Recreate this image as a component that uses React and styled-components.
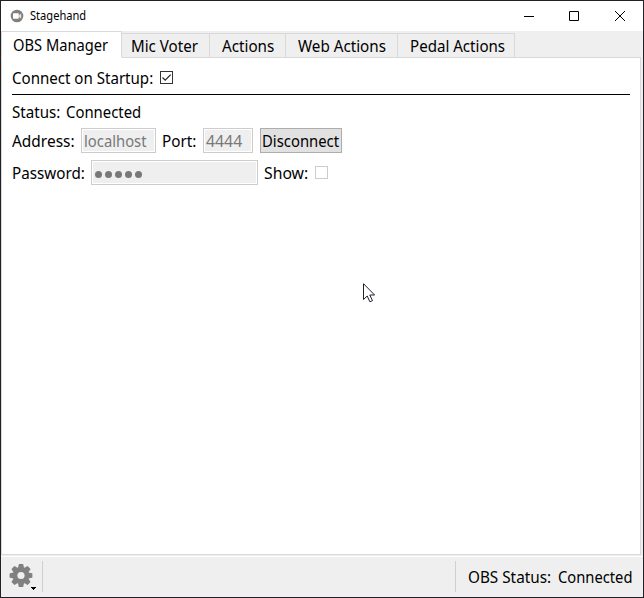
import React from 'react';
import styled, { createGlobalStyle } from 'styled-components';

const GlobalStyle = createGlobalStyle`
  *, *::before, *::after { box-sizing: border-box; }
  body { margin: 0; overflow: hidden; background: #fff; }
`;

const Window = styled.main`
  width: 644px;
  height: 598px;
  display: flex;
  flex-direction: column;
  border: 1px solid #232123;
  background: #efefef;
  color: #000;
  font: 16px/22px "Noto Sans", "Open Sans", sans-serif;
`;

const TitleBar = styled.header`
  height: 30px;
  flex: none;
  display: flex;
  align-items: center;
  padding-left: 9px;
  background: #fff;
  svg { display: block; flex: none; }
`;

const Label = styled.span`
  display: block;
  flex: none;
  width: ${(p) => p.$w}px;
  white-space: nowrap;
  transform: scaleX(${(p) => p.$fit || 0.93});
  transform-origin: 0 50%;
`;

const Title = styled(Label)`
  font-size: 12px;
  line-height: 16px;
  margin-left: 6px;
`;

const WindowControls = styled.div`
  display: flex;
  margin-left: auto;
`;

const ControlButton = styled.button`
  width: 46px;
  height: 30px;
  padding: 0;
  border: 0;
  background: transparent;
  display: grid;
  place-items: center;
  svg { overflow: visible; }
`;

const TabBar = styled.nav`
  height: 27px;
  flex: none;
  display: flex;
  align-items: flex-end;
  position: relative;
  z-index: 1;
`;

const Tab = styled.button`
  flex: none;
  width: ${(p) => p.$w}px;
  height: ${(p) => (p.$active ? 27 : 25)}px;
  padding: ${(p) => (p.$active ? '2px 0 0 11px' : `1px 0 0 ${p.$pad}px`)};
  border: 1px solid #d9d9d9;
  border-left-width: ${(p) => (p.$active ? 1 : 0)}px;
  border-bottom-color: ${(p) => (p.$active ? '#fff' : '#d9d9d9')};
  background: ${(p) => (p.$active ? '#fff' : '#efefef')};
  color: inherit;
  font: inherit;
  text-align: left;
  display: flex;
  align-items: flex-start;
`;

const Pane = styled.section`
  height: 498px;
  flex: none;
  width: 640px;
  margin-top: -1px;
  padding: 9px 10px 0;
  border: 1px solid #d9d9d9;
  background: #fff;
`;

const Row = styled.div`
  display: flex;
  align-items: flex-start;
  height: ${(p) => p.$h}px;
  padding-top: ${(p) => p.$top || 0}px;
`;

const CheckBox = styled.span`
  width: 13px;
  height: 13px;
  flex: none;
  margin-top: ${(p) => p.$top}px;
  border: 1px solid ${(p) => (p.$disabled ? '#ccc' : '#333')};
  background: #fff;
  svg { display: block; }
`;

const Rule = styled.hr`
  width: 618px;
  height: 1px;
  margin: 0;
  border: 0;
  background: #000;
`;

const Field = styled.div`
  flex: none;
  width: ${(p) => p.$w}px;
  height: 25px;
  margin-right: ${(p) => p.$gap}px;
  padding: 1px 0 0 ${(p) => p.$pad}px;
  border: 1px solid #ccc;
  box-shadow: inset 0 0 0 1px #fff;
  background: #efefef;
  color: #787878;
  display: flex;
  align-items: flex-start;
`;

const Dots = styled.div`
  display: flex;
  gap: 3px;
  padding-top: 9px;
`;

const Dot = styled.i`
  width: 7px;
  height: 7px;
  border-radius: 50%;
  background: #787878;
`;

const PushButton = styled.button`
  width: 82px;
  height: 25px;
  padding: 1px 0 0 1px;
  border: 1px solid #adadad;
  background: #e1e1e1;
  color: inherit;
  font: inherit;
  text-align: left;
  display: flex;
  align-items: flex-start;
`;

const FieldLabel = styled(Label)`
  margin-top: 2px;
`;

const StatusBar = styled.footer`
  flex: 1;
  display: flex;
  border-top: 1px solid #fff;
  margin-top: 1px;
  padding-top: 4px;
`;

const GearButton = styled.button`
  width: 41px;
  height: 31px;
  padding: 1px 0 0 8px;
  border: 0;
  background: transparent;
  svg { display: block; }
`;

const Separator = styled.i`
  width: 1px;
  height: 31px;
  background: #d0d0d0;
`;

const StatusText = styled.div`
  display: flex;
  padding: 5px 0 0 12px;
`;

const Spacer = styled.div`
  width: 412px;
`;

const Cursor = styled.svg`
  position: absolute;
  left: 363px;
  top: 283px;
`;

const tabs = [
  { text: 'OBS Manager', w: 121, active: true, fit: 0.918 },
  { text: 'Mic Voter', w: 88, pad: 9, fit: 0.945 },
  { text: 'Actions', w: 76, pad: 12, fit: 0.95 },
  { text: 'Web Actions', w: 112, pad: 12, fit: 0.95 },
  { text: 'Pedal Actions', w: 117, pad: 11.5, fit: 0.943 },
];

const teeth = [0, 45, 90, 135, 180, 225, 270, 315];

function CameraIcon() {
  return (
    <svg width="14" height="14" viewBox="0 0 14 14">
      <circle cx="7" cy="7" r="6.3" fill="#808080" />
      <rect x="3" y="4.3" width="5.8" height="5.4" rx="0.8" fill="#fff" />
      <path d="M9.2 6 11.2 4.6V9.6L9.2 8.2Z" fill="#f3e6d2" />
    </svg>
  );
}

function GearIcon() {
  return (
    <svg width="30" height="28" viewBox="0 0 30 28">
      <g fill="#808080">
        {teeth.map((a) => (
          <path key={a} d="M9 5 9.7 1.6Q9.8 1.1 10.3 1.1H13.7Q14.2 1.1 14.3 1.6L15 5Z" transform={`rotate(${a} 12 12.5)`} />
        ))}
        <path fillRule="evenodd" d="M12 4.1a8.4 8.4 0 1 0 0 16.8 8.4 8.4 0 0 0 0-16.8Zm0 4.8a3.6 3.6 0 1 1 0 7.2 3.6 3.6 0 0 1 0-7.2Z" />
      </g>
      <path d="M22 24h5v1h-1v1h-1v1h-1v-1h-1v-1h-1z" fill="#000" shapeRendering="crispEdges" />
    </svg>
  );
}

export default function App() {
  return (
    <>
      <GlobalStyle />
      <Window>
        <TitleBar>
          <CameraIcon />
          <Title $w={60} $fit={0.925}>Stagehand</Title>
          <WindowControls>
            <ControlButton aria-label="Minimize">
              <svg width="10" height="10"><path d="M1 5.5h10" stroke="#000" /></svg>
            </ControlButton>
            <ControlButton aria-label="Maximize">
              <svg width="10" height="10"><path d="M.5.5h9v9h-9z" fill="none" stroke="#000" /></svg>
            </ControlButton>
            <ControlButton aria-label="Close">
              <svg width="10" height="10"><path d="M0 0 10 10M10 0 0 10" stroke="#000" /></svg>
            </ControlButton>
          </WindowControls>
        </TitleBar>
        <TabBar>
          {tabs.map((t) => (
            <Tab key={t.text} $w={t.w} $pad={t.pad} $active={t.active}>
              <Label $fit={t.fit}>{t.text}</Label>
            </Tab>
          ))}
        </TabBar>
        <Pane>
          <Row $h={27}>
            <Label $w={148} $fit={0.942}>Connect on Startup:</Label>
            <CheckBox $top={4}>
              <svg width="11" height="11"><path d="M1.5 5.5 4.2 8.2 9.7 2.7" fill="none" stroke="#222" strokeWidth="1.2" /></svg>
            </CheckBox>
          </Row>
          <Rule />
          <Row $h={33} $top={6}>
            <Label $w={54} $fit={0.945}>Status:</Label>
            <Label $w={74} $fit={0.93}>Connected</Label>
          </Row>
          <Row $h={32}>
            <FieldLabel $w={69} $fit={0.965}>Address:</FieldLabel>
            <Field $w={75} $gap={6} $pad={2}>
              <Label $w={62} $fit={0.925}>localhost</Label>
            </Field>
            <FieldLabel $w={41} $fit={0.955}>Port:</FieldLabel>
            <Field $w={50} $gap={7} $pad={1.6}>
              <Label $w={36} $fit={0.99}>4444</Label>
            </Field>
            <PushButton>
              <Label $w={76} $fit={0.928}>Disconnect</Label>
            </PushButton>
          </Row>
          <Row $h={32}>
            <FieldLabel $w={79} $fit={0.95}>Password:</FieldLabel>
            <Field $w={167} $gap={6} $pad={3}>
              <Dots><Dot /><Dot /><Dot /><Dot /><Dot /></Dots>
            </Field>
            <FieldLabel $w={51} $fit={0.985}>Show:</FieldLabel>
            <CheckBox $top={6} $disabled />
          </Row>
        </Pane>
        <StatusBar>
          <GearButton aria-label="Settings"><GearIcon /></GearButton>
          <Separator />
          <Spacer />
          <Separator />
          <StatusText>
            <Label $w={90} $fit={0.955}>OBS Status:</Label>
            <Label $w={74} $fit={0.92}>Connected</Label>
          </StatusText>
        </StatusBar>
        <Cursor width="13" height="20" viewBox="0 0 13 20">
          <path d="M.5.7V16.5L4.2 13 6.9 18.8 9.5 17.6 6.8 12H11.6Z" fill="#fff" stroke="#20202c" />
        </Cursor>
      </Window>
    </>
  );
}
